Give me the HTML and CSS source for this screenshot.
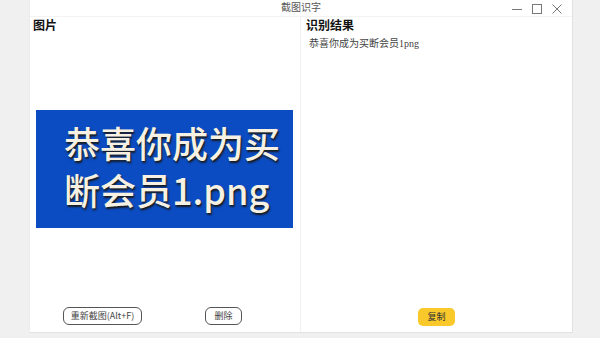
FILE: index.html
```html
<!DOCTYPE html>
<html lang="zh">
<head>
  <meta charset="UTF-8" />
  <title>截图识字</title>
  <link rel="stylesheet" href="styles.css">
</head>
<body>
  <div class="window">
    <!-- title bar -->
    <div class="titlebar">
      <span></span>
      <span class="title">截图识字</span>
      <div class="controls">
        <svg width="12" height="12" viewBox="0 0 12 12"><path d="M1 6.5h10" stroke="#777" stroke-width="1" fill="none"/></svg>
        <svg width="12" height="12" viewBox="0 0 12 12"><rect x="1.5" y="1.5" width="9" height="9" stroke="#777" stroke-width="1" fill="none"/></svg>
        <svg width="12" height="12" viewBox="0 0 12 12"><path d="M1.5 1.5l9 9M10.5 1.5l-9 9" stroke="#777" stroke-width="1" fill="none"/></svg>
      </div>
    </div>

    <div class="panes">
      <!-- left: picture -->
      <div class="pane pane-left">
        <div class="heading">图片</div>
        <div class="picture">
          <div class="pic-line">恭喜你成为买</div>
          <div class="pic-line">断会员1.png</div>
        </div>
        <div class="actions actions-left">
          <button class="btn btn-retake">重新截图(Alt+F)</button>
          <button class="btn btn-small">删除</button>
        </div>
      </div>

      <!-- right: result -->
      <div class="pane pane-right">
        <div class="heading">识别结果</div>
        <div class="result">恭喜你成为买断会员1png</div>
        <div class="actions actions-right">
          <button class="btn btn-copy">复制</button>
        </div>
      </div>
    </div>
  </div>
</body>
</html>
```

FILE: styles.css
```css
body {
  margin: 0;
  padding: 0;
  background: #f0f0f0;
  font-family: "Liberation Serif", "Noto Sans CJK SC", serif;
}
.window {
  margin-left: 29px;
  width: 542px;
  height: 332px;
  background: #fff;
  border-right: 1px solid #e2e2e2;
  border-bottom: 1px solid #e2e2e2;
  border-left: 1px solid #ececec;
  display: flex;
  flex-direction: column;
}
.titlebar {
  height: 16px;
  border-bottom: 1px solid #f3f3f3;
  display: grid;
  grid-template-columns: 1fr auto 1fr;
  align-items: center;
}
.title {
  font-size: 10px;
  color: #555;
  line-height: 16px;
}
.controls {
  justify-self: end;
  display: flex;
  gap: 8px;
  padding-right: 9px;
  padding-top: 2px;
}
.panes {
  flex: 1;
  display: flex;
}
.pane {
  width: 270px;
  display: flex;
  flex-direction: column;
}
.pane-left {
  border-right: 1px solid #f0f0f0;
  padding-left: 3px;
  width: 267px;
}
.pane-right {
  padding-left: 5px;
  width: 266px;
}
.heading {
  font-size: 12px;
  font-weight: bold;
  color: #111;
  line-height: 14px;
  margin-top: 2px;
}
.picture {
  margin-top: 77px;
  margin-left: 3px;
  width: 257px;
  height: 118px;
  box-sizing: border-box;
  background: #0b4cc2;
  padding: 9px 0 0 28px;
  font-family: "Noto Sans CJK SC", sans-serif;
  font-size: 36px;
  font-weight: 500;
  line-height: 47px;
  color: #f6f1e2;
  text-shadow: 1px 2px 2px #1a1a1a;
  white-space: nowrap;
}
.result {
  margin-top: 4px;
  margin-left: 3px;
  font-size: 10px;
  color: #444;
  line-height: 14px;
}
.actions {
  margin-top: auto;
  padding-bottom: 7px;
  display: flex;
}
.actions-left {
  padding-left: 30px;
  gap: 63px;
}
.actions-right {
  padding-left: 112px;
  padding-bottom: 6px;
}
.btn {
  height: 18px;
  padding: 0 6px;
  border: 1px solid #555;
  border-radius: 6px;
  background: #fff;
  font-family: "Noto Sans CJK SC", sans-serif;
  font-size: 9px;
  color: #444;
  line-height: 16px;
}
.btn-retake {
  width: 79px;
}
.btn-small {
  width: 37px;
}
.btn-copy {
  width: 37px;
  border: none;
  border-radius: 5px;
  background: #f9c92c;
  color: #333;
}
```
